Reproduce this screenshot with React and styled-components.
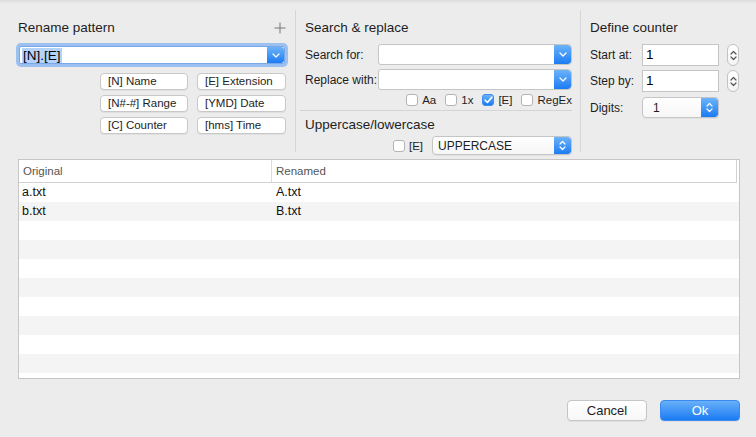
import React from "react";
import styled, { createGlobalStyle } from "styled-components";

const GlobalStyle = createGlobalStyle`
  html, body {
    margin: 0;
    padding: 0;
    background: #ececec;
    font-family: "Liberation Sans", Arial, sans-serif;
    color: #000;
  }
`;

const rows = [
  { original: "a.txt", renamed: "A.txt" },
  { original: "b.txt", renamed: "B.txt" },
  ...Array.from({ length: 8 }, () => ({ original: "", renamed: "" })),
];

const Chevron = ({ color = "#fff" }) => (
  <svg width="8" height="5" viewBox="0 0 8 5">
    <path d="M1 1 L4 4 L7 1" fill="none" stroke={color} strokeWidth="1.3" strokeLinecap="round" strokeLinejoin="round" />
  </svg>
);

const UpDown = ({ color = "#fff" }) => (
  <svg width="7" height="11" viewBox="0 0 7 11">
    <path d="M1 4 L3.5 1.5 L6 4 M1 7 L3.5 9.5 L6 7" fill="none" stroke={color} strokeWidth="1.2" strokeLinecap="round" strokeLinejoin="round" />
  </svg>
);

const Check = () => (
  <svg width="9" height="8" viewBox="0 0 9 8">
    <path d="M1.2 4.2 L3.4 6.5 L7.8 1.2" fill="none" stroke="#fff" strokeWidth="1.6" strokeLinecap="round" strokeLinejoin="round" />
  </svg>
);

const PlusIcon = () => (
  <svg width="12" height="12" viewBox="0 0 12 12">
    <path d="M6 0.5 V11.5 M0.5 6 H11.5" stroke="#777" strokeWidth="1" />
  </svg>
);

function CheckBox({ label, checked }) {
  return (
    <CheckItem>
      <Box $checked={checked}>{checked && <Check />}</Box>
      <span>{label}</span>
    </CheckItem>
  );
}

export default function App() {
  return (
    <>
      <GlobalStyle />
      <Page>
        <TopRow>
          <Panel $width={296} $padLeft={18} $divider>
            <TitleRow>
              <Title>Rename pattern</Title>
              <Plus>
                <PlusIcon />
              </Plus>
            </TitleRow>
            <FocusCombo>
              <ComboText>
                <Selected>[N].[E]</Selected>
              </ComboText>
              <BlueButton $width={17}>
                <Chevron />
              </BlueButton>
            </FocusCombo>
            <TokenGrid>
              <Token>[N] Name</Token>
              <Token>[E] Extension</Token>
              <Token>[N#-#] Range</Token>
              <Token>[YMD] Date</Token>
              <Token>[C] Counter</Token>
              <Token>[hms] Time</Token>
            </TokenGrid>
          </Panel>

          <Panel $width={285} $padLeft={9} $divider>
            <Title>Search &amp; replace</Title>
            <FormRow $top={8}>
              <Label $width={73}>Search for:</Label>
              <Combo>
                <ComboText />
                <BlueButton $width={17}>
                  <Chevron />
                </BlueButton>
              </Combo>
            </FormRow>
            <FormRow $top={4}>
              <Label $width={73}>Replace with:</Label>
              <Combo>
                <ComboText />
                <BlueButton $width={17}>
                  <Chevron />
                </BlueButton>
              </Combo>
            </FormRow>
            <Options>
              <CheckBox label="Aa" />
              <CheckBox label="1x" />
              <CheckBox label="[E]" checked />
              <CheckBox label="RegEx" />
            </Options>
            <Separator />
            <Title $top={6}>Uppercase/lowercase</Title>
            <CaseRow>
              <CheckBox label="[E]" />
              <Popup $width={140}>
                <PopupText>UPPERCASE</PopupText>
                <BlueButton $width={17}>
                  <UpDown />
                </BlueButton>
              </Popup>
            </CaseRow>
          </Panel>

          <Panel $width={175} $padLeft={9}>
            <Title>Define counter</Title>
            <FormRow $top={8}>
              <Label $width={52}>Start at:</Label>
              <NumField>1</NumField>
              <Stepper>
                <UpDown color="#555" />
              </Stepper>
            </FormRow>
            <FormRow $top={4}>
              <Label $width={52}>Step by:</Label>
              <NumField>1</NumField>
              <Stepper>
                <UpDown color="#555" />
              </Stepper>
            </FormRow>
            <FormRow $top={5}>
              <Label $width={52}>Digits:</Label>
              <Popup $width={77} $height={21}>
                <PopupText $pad={10}>1</PopupText>
                <BlueButton $width={17}>
                  <UpDown />
                </BlueButton>
              </Popup>
            </FormRow>
          </Panel>
        </TopRow>

        <Table>
          <HeaderRow>
            <HeaderCell $width={253}>Original</HeaderCell>
            <HeaderCell $grow>Renamed</HeaderCell>
          </HeaderRow>
          {rows.map((r, i) => (
            <Row key={i} $alt={i % 2 === 1}>
              <Cell $width={253}>{r.original}</Cell>
              <Cell>{r.renamed}</Cell>
            </Row>
          ))}
        </Table>

        <Footer>
          <Button>Cancel</Button>
          <Button $primary>Ok</Button>
        </Footer>
      </Page>
    </>
  );
}

/*--- STYLING ---*/

const Page = styled.div`
  width: 756px;
  height: 437px;
  box-sizing: border-box;
  overflow: hidden;
  background: linear-gradient(#dcdcdc 0px, #e6e6e6 2px, #ececec 4px, #ececec 100%);
  padding-top: 10px;
`;

const TopRow = styled.div`
  display: flex;
  height: 142px;
`;

const Panel = styled.div`
  width: ${(p) => p.$width}px;
  box-sizing: border-box;
  padding-left: ${(p) => p.$padLeft}px;
  padding-right: 8px;
  border-right: ${(p) => (p.$divider ? "1px solid #d6d6d6" : "none")};
  display: flex;
  flex-direction: column;

  & > * {
    flex-shrink: 0;
  }
`;

const TitleRow = styled.div`
  display: flex;
  justify-content: space-between;
  align-items: center;
`;

const Title = styled.div`
  font-size: 13.5px;
  line-height: 16px;
  margin-top: ${(p) => p.$top ?? 10}px;
  color: #1e1e1e;
`;

const Plus = styled.div`
  margin-top: 9px;
  margin-right: 1px;
  display: flex;
`;

const Combo = styled.div`
  flex: 1;
  display: flex;
  height: 21px;
  box-sizing: border-box;
  background: #fff;
  border: 1px solid #c5c5c5;
  border-radius: 3px 4px 4px 3px;
  overflow: hidden;
`;

const FocusCombo = styled(Combo)`
  flex: none;
  margin-top: 10px;
  margin-left: 1px;
  margin-right: 2px;
  height: 18px;
  border-color: #7aa7e8;
  box-shadow: 0 0 0 3px #9cc1f0;
  border-radius: 2px;
`;

const ComboText = styled.div`
  flex: 1;
  display: flex;
  align-items: center;
  padding-left: 2px;
  font-size: 13.5px;
`;

const Selected = styled.span`
  background: #b4d3fb;
  line-height: 15px;
  padding: 0 1px;
`;

const BlueButton = styled.div`
  width: ${(p) => p.$width}px;
  flex: none;
  display: flex;
  align-items: center;
  justify-content: center;
  background: linear-gradient(#6cb3fa, #1c7cf3);
  border-radius: 0 3px 3px 0;
`;

const TokenGrid = styled.div`
  display: grid;
  grid-template-columns: 88px 89px;
  column-gap: 9px;
  row-gap: 5px;
  justify-content: end;
  margin-top: 9px;
  margin-right: 1px;
`;

const Token = styled.div`
  height: 17px;
  box-sizing: border-box;
  background: #fff;
  border: 1px solid #c8c8c8;
  border-radius: 4px;
  box-shadow: 0 1px 0 rgba(0, 0, 0, 0.05);
  font-size: 11.5px;
  line-height: 15px;
  padding-left: 7px;
  color: #1e1e1e;
  white-space: nowrap;
`;

const FormRow = styled.div`
  display: flex;
  align-items: center;
  margin-top: ${(p) => p.$top}px;
`;

const Label = styled.div`
  width: ${(p) => p.$width}px;
  flex: none;
  font-size: 12px;
  color: #1e1e1e;
`;

const Options = styled.div`
  display: flex;
  justify-content: flex-end;
  gap: 9px;
  margin-top: 3px;
  height: 14px;
  align-items: center;
`;

const CheckItem = styled.div`
  display: flex;
  align-items: center;
  gap: 4px;
  font-size: 11.5px;
  color: #1e1e1e;
`;

const Box = styled.div`
  width: 12px;
  height: 12px;
  box-sizing: border-box;
  border-radius: 3px;
  display: flex;
  align-items: center;
  justify-content: center;
  border: 1px solid ${(p) => (p.$checked ? "#3c8cf1" : "#b4b4b4")};
  background: ${(p) => (p.$checked ? "linear-gradient(#6cb3fa, #1c7cf3)" : "#fff")};
`;

const Separator = styled.div`
  height: 1px;
  background: #d4d4d4;
  margin: 3px 0 0 -5px;
`;

const CaseRow = styled.div`
  display: flex;
  justify-content: flex-end;
  align-items: center;
  gap: 9px;
  margin-top: 3px;
`;

const Popup = styled.div`
  width: ${(p) => p.$width}px;
  height: ${(p) => p.$height || 19}px;
  box-sizing: border-box;
  display: flex;
  background: linear-gradient(#ffffff, #f6f6f6);
  border: 1px solid #c5c5c5;
  border-radius: 4px;
  overflow: hidden;
  box-shadow: 0 1px 0 rgba(0, 0, 0, 0.04);
`;

const PopupText = styled.div`
  flex: 1;
  display: flex;
  align-items: center;
  padding-left: ${(p) => p.$pad || 5}px;
  font-size: 12px;
  color: #1e1e1e;
`;

const NumField = styled.div`
  width: 77px;
  height: 22px;
  box-sizing: border-box;
  background: #fff;
  border: 1px solid #c5c5c5;
  font-size: 13.5px;
  line-height: 20px;
  padding-left: 3px;
`;

const Stepper = styled.div`
  width: 12px;
  height: 22px;
  box-sizing: border-box;
  margin-left: 8px;
  background: linear-gradient(#ffffff, #f4f4f4);
  border: 1px solid #c2c2c2;
  border-radius: 6px;
  display: flex;
  align-items: center;
  justify-content: center;
`;

const Table = styled.div`
  margin: 7px 16px 0 18px;
  height: 220px;
  box-sizing: border-box;
  border: 1px solid #c6c6c6;
  background: #fff;
  overflow: hidden;
`;

const HeaderRow = styled.div`
  display: flex;
  height: 23px;
  box-sizing: border-box;
  border-bottom: 1px solid #d2d2d2;
  border-right: 1px solid #d2d2d2;
  margin-right: 2px;
`;

const HeaderCell = styled.div`
  width: ${(p) => (p.$width ? `${p.$width}px` : "auto")};
  flex: ${(p) => (p.$grow ? 1 : "none")};
  box-sizing: border-box;
  padding-left: 4px;
  font-size: 11.5px;
  line-height: 22px;
  color: #555;
  border-right: ${(p) => (p.$grow ? "none" : "1px solid #dcdcdc")};
`;

const Row = styled.div`
  display: flex;
  height: 19px;
  background: ${(p) => (p.$alt ? "#f4f4f4" : "#fff")};
`;

const Cell = styled.div`
  width: ${(p) => (p.$width ? `${p.$width}px` : "auto")};
  flex: ${(p) => (p.$width ? "none" : 1)};
  padding-left: ${(p) => (p.$width ? 3 : 1)}px;
  font-size: 12.5px;
  line-height: 19px;
  color: #111;
`;

const Footer = styled.div`
  display: flex;
  justify-content: flex-end;
  gap: 13px;
  margin-top: 21px;
  padding-right: 16px;
`;

const Button = styled.button`
  width: 80px;
  height: 21px;
  box-sizing: border-box;
  border-radius: 4px;
  font-family: "Liberation Sans", Arial, sans-serif;
  font-size: 13px;
  padding: 0;
  outline: none;
  border: 1px solid ${(p) => (p.$primary ? "#3a8af2" : "#c5c5c5")};
  background: ${(p) => (p.$primary ? "linear-gradient(#68b0fa, #1b7bf3)" : "linear-gradient(#ffffff, #f7f7f7)")};
  color: ${(p) => (p.$primary ? "#fff" : "#1e1e1e")};
  box-shadow: 0 1px 0 rgba(0, 0, 0, 0.05);
`;
